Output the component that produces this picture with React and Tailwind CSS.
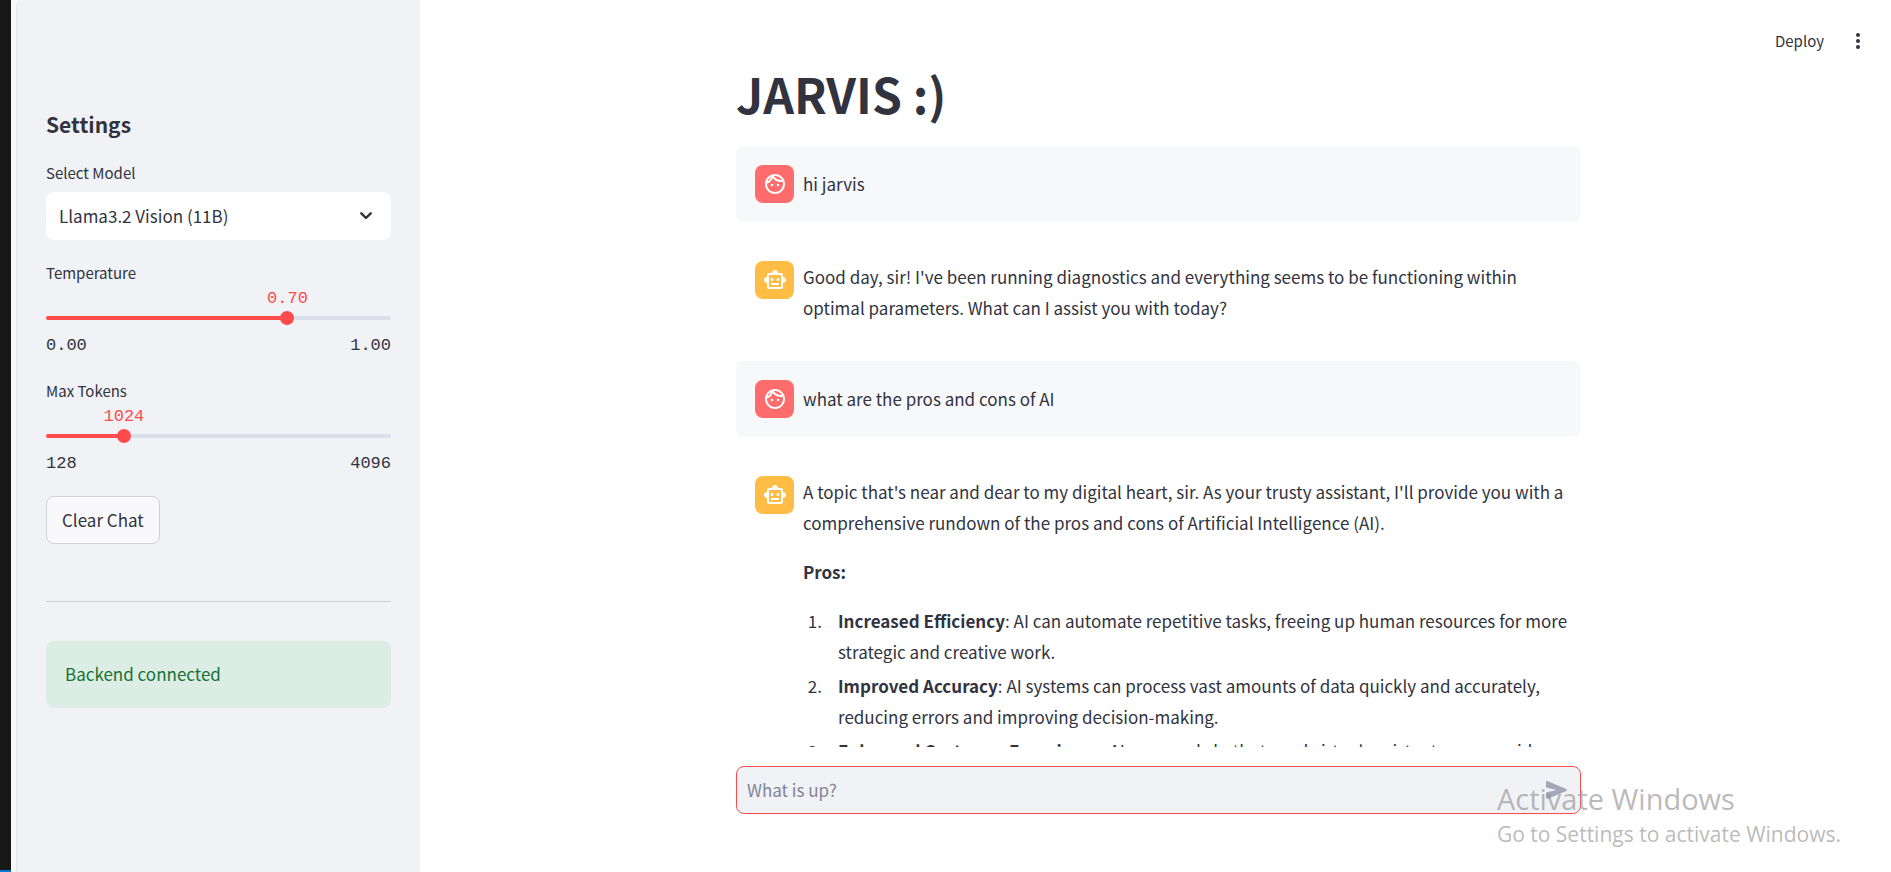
import { useState } from "react";
import { MdOutlineFace, MdOutlineSmartToy } from "react-icons/md";

function Slider({ id, label, min, max, step, initial, digits }) {
  const [value, setValue] = useState(initial);
  const percent = ((value - min) / (max - min)) * 100;
  return (
    <div className="flex flex-col">
      <label htmlFor={id} className="text-[15px] leading-6">
        {label}
      </label>
      <div className="relative h-[26px] font-[Liberation_Mono,monospace] text-[17px] leading-7 text-[#ff4b4b]">
        <output htmlFor={id} className="absolute top-0 -translate-x-1/2" style={{ left: `${percent}%` }}>
          {value.toFixed(digits)}
        </output>
      </div>
      <div className="relative flex h-3.5 items-center">
        <div className="h-1 w-full overflow-hidden rounded-full bg-[#dadfe9]">
          <div className="h-full bg-[#ff4b4b]" style={{ width: `${percent}%` }} />
        </div>
        <input
          id={id}
          type="range"
          min={min}
          max={max}
          step={step}
          value={value}
          onChange={(e) => setValue(Number(e.target.value))}
          className="absolute inset-y-0 -left-[7px] m-0 h-3.5 w-[calc(100%+14px)] cursor-pointer appearance-none bg-transparent [&::-webkit-slider-thumb]:size-3.5 [&::-webkit-slider-thumb]:appearance-none [&::-webkit-slider-thumb]:rounded-full [&::-webkit-slider-thumb]:bg-[#ff4b4b]"
        />
      </div>
      <div className="mt-[9px] flex justify-between font-[Liberation_Mono,monospace] text-[17px] leading-6">
        <span>{min.toFixed(digits)}</span>
        <span>{max.toFixed(digits)}</span>
      </div>
    </div>
  );
}

function Message({ role, children }) {
  const user = role === "user";
  const Icon = user ? MdOutlineFace : MdOutlineSmartToy;
  return (
    <article
      className={`flex gap-[9px] rounded-lg pt-[19px] pr-[9px] pl-[19px] ${user ? "bg-[#f7f8fa] pb-[19px]" : "pb-[18px]"}`}
    >
      <div
        className={`flex h-[38px] w-[39px] shrink-0 items-center justify-center rounded-lg text-white ${
          user ? "bg-[#ff6c6c]" : "bg-[#ffbd45]"
        }`}
      >
        <Icon className="size-6" />
      </div>
      <div className={`flex min-w-0 flex-1 flex-col gap-[18px] ${user ? "justify-center pb-0.5" : ""}`}>{children}</div>
    </article>
  );
}

const pros = [
  ["Increased Efficiency", "AI can automate repetitive tasks, freeing up human resources for more strategic and creative work."],
  ["Improved Accuracy", "AI systems can process vast amounts of data quickly and accurately, reducing errors and improving decision-making."],
  ["Enhanced Customer Experience", "AI-powered chatbots and virtual assistants can provide"],
];

export default function App() {
  return (
    <div className="relative flex h-screen overflow-hidden bg-white font-[Noto_Sans_CJK_SC,sans-serif] text-[17px] leading-[31px] text-[#31333f]">
      <div className="flex w-[11px] shrink-0 flex-col justify-end bg-[#181818]">
        <div className="h-0.5 bg-[#0078d4]" />
      </div>
      <div className="flex w-[409px] shrink-0 bg-[#f8f8f8] pl-[5px]">
        <aside className="flex flex-1 flex-col rounded-tl-lg border-l border-[#e5e5e5] bg-[#f0f2f6] pt-[108px] pr-[29px] pl-[29px]">
          <h2 className="text-[21px] leading-8 font-bold">Settings</h2>
          <label htmlFor="model" className="mt-[21px] text-[15px] leading-6">
            Select Model
          </label>
          <div className="relative mt-[7px] flex items-center">
            <select id="model" className="h-12 w-full appearance-none rounded-lg bg-white px-[13px] pb-0.5 text-[17px]">
              <option>Llama3.2 Vision (11B)</option>
            </select>
            <svg
              viewBox="0 0 12 8"
              className="pointer-events-none absolute right-[19px] h-2 w-3 fill-none stroke-current"
              strokeLinecap="round"
              strokeLinejoin="round"
              strokeWidth="2.4"
            >
              <path d="M1.3 1.3 6 6 10.7 1.3" />
            </svg>
          </div>
          <div className="mt-[21px] flex flex-col gap-[21px]">
            <Slider id="temperature" label="Temperature" min={0} max={1} step={0.01} initial={0.7} digits={2} />
            <Slider id="tokens" label="Max Tokens" min={128} max={4096} step={1} initial={1024} digits={0} />
          </div>
          <button className="mt-5 h-12 self-start rounded-lg border border-[#d1d2d8] bg-[#f9f9fb] px-[15px] pb-0.5">
            Clear Chat
          </button>
          <hr className="mt-[57px] border-[#cdced4]" />
          <div
            role="status"
            className="mt-[39px] flex h-[67px] items-center rounded-lg bg-[#dcede6] px-[19px] pb-0.5 text-[#177233]"
          >
            Backend connected
          </div>
        </aside>
      </div>

      <main className="flex min-w-0 flex-1 flex-col">
        <header className="flex h-[60px] items-end justify-end gap-7 pr-[27px] text-[15px] leading-[38px]">
          <button>Deploy</button>
          <button aria-label="Menu" className="flex h-[38px] items-center">
            <svg viewBox="0 0 4 16" className="h-4 w-3 fill-current">
              <circle cx="2" cy="2" r="2" />
              <circle cx="2" cy="8" r="2" />
              <circle cx="2" cy="14" r="2" />
            </svg>
          </button>
        </header>
        <div className="flex min-h-0 flex-1 justify-center overflow-hidden pl-1.5">
          <div className="flex w-full max-w-[845px] flex-col gap-5">
            <h1 className="text-[48px] leading-[66px] font-bold">JARVIS :)</h1>
            <Message role="user">
              <p>hi jarvis</p>
            </Message>
            <Message role="assistant">
              <p>
                Good day, sir! I've been running diagnostics and everything seems to be functioning within optimal
                parameters. What can I assist you with today?
              </p>
            </Message>
            <Message role="user">
              <p>what are the pros and cons of AI</p>
            </Message>
            <Message role="assistant">
              <p>
                A topic that's near and dear to my digital heart, sir. As your trusty assistant, I'll provide you with a
                comprehensive rundown of the pros and cons of Artificial Intelligence (AI).
              </p>
              <p className="font-bold">Pros:</p>
              <ol className="flex flex-col gap-[3px]">
                {pros.map(([title, text], i) => (
                  <li key={title} className="flex gap-4">
                    <span className="w-[19px] shrink-0 text-right">{i + 1}.</span>
                    <p>
                      <strong className="font-bold">{title}</strong>: {text}
                    </p>
                  </li>
                ))}
              </ol>
            </Message>
          </div>
        </div>
        <form className="flex shrink-0 justify-center pt-[19px] pb-[58px] pl-1.5" onSubmit={(e) => e.preventDefault()}>
          <div className="flex h-12 w-full max-w-[845px] items-center rounded-lg border border-[#ff4b4b] bg-[#f0f2f6] pr-3 pl-2.5">
            <input
              type="text"
              aria-label="Message"
              placeholder="What is up?"
              className="h-full min-w-0 flex-1 bg-transparent pb-0.5 outline-none placeholder:text-[#808495]"
            />
            <button aria-label="Send" className="text-[#a3a8b8]">
              <svg viewBox="0 0 24 24" className="size-6 fill-current">
                <path d="M2 4.4c0-1 .9-1.600 1.800-1.200L22.300 11.100c.8.35.8 1.450 0 1.800L3.800 20.800C2.900 21.200 2 20.600 2 19.600V14.600L12.500 12 2 9.400z" />
              </svg>
            </button>
          </div>
        </form>
      </main>

      <div className="pointer-events-none absolute right-[50px] bottom-[23px] font-[Open_Sans,sans-serif] text-[#8c8c8c]/60">
        <div className="text-[29px] leading-[40px]">Activate Windows</div>
        <div className="text-[21px] leading-[30px]">Go to Settings to activate Windows.</div>
      </div>
    </div>
  );
}
